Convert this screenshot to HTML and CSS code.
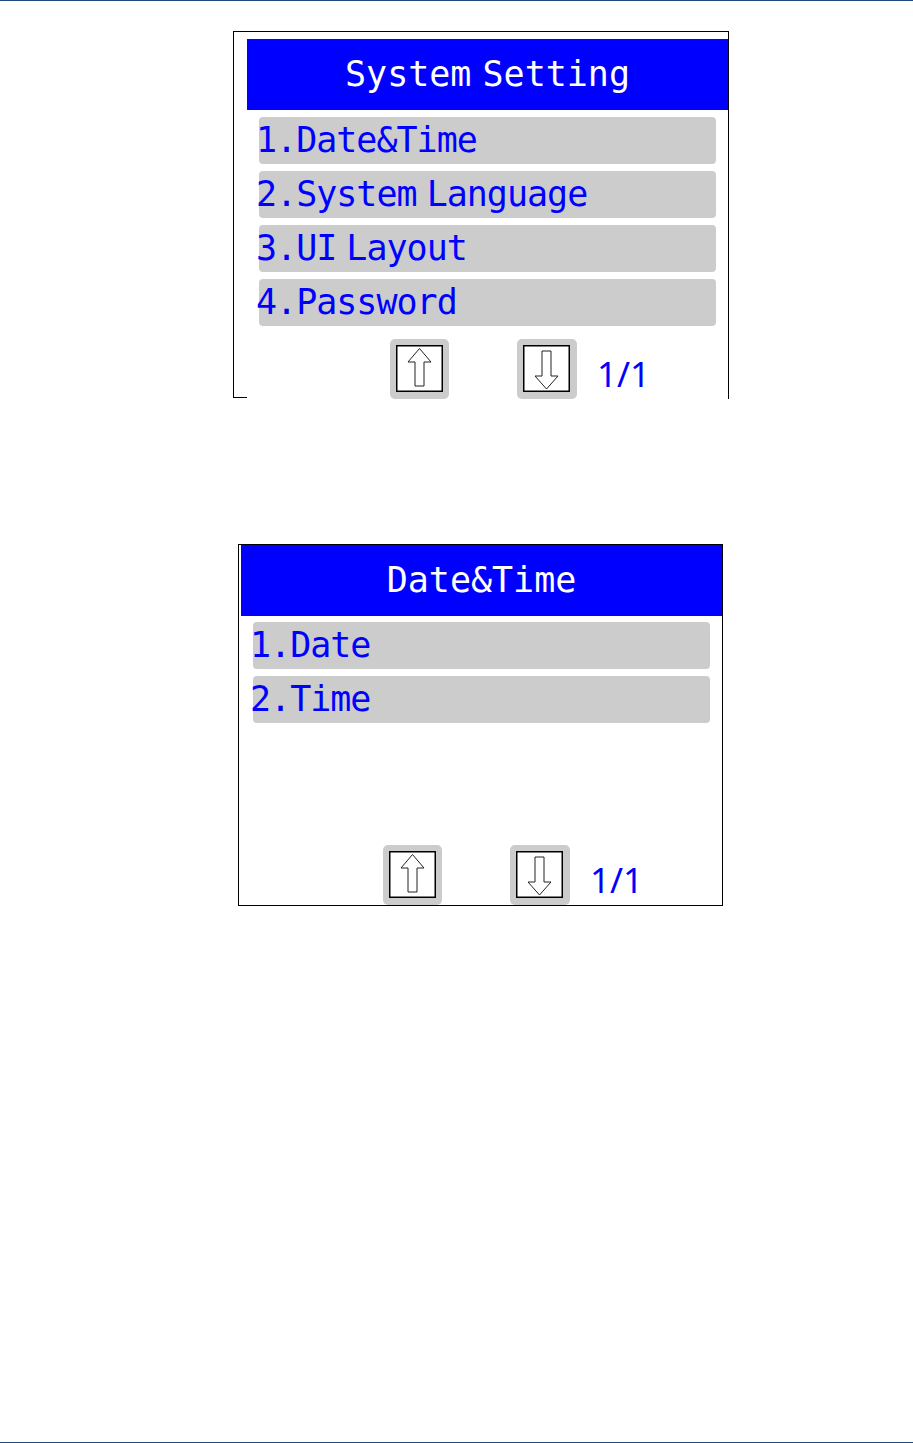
FILE: index.html
```html
<!DOCTYPE html>
<html lang="en">
<head>
<meta charset="utf-8">
<title>System Setting</title>
<link rel="stylesheet" href="styles.css">
</head>
<body>
<div class="page">
  <div class="rule"></div>

  <div class="frame frame-one">
    <div class="frame-spacer"></div>
    <div class="screen">
      <div class="screen-title">System Setting</div>
      <div class="menu">
        <div class="menu-row">1.Date&amp;Time</div>
        <div class="menu-row">2.System Language</div>
        <div class="menu-row">3.UI Layout</div>
        <div class="menu-row">4.Password</div>
      </div>
      <div class="pager">
        <div class="pager-btn">
          <svg width="47" height="47" viewBox="0 0 47 47"><rect x="0.75" y="0.75" width="45.5" height="45.5" fill="#fff" stroke="#000" stroke-width="1.5"/><polygon points="23.5,3.5 35,17 28,17 28,41 19,41 19,17 12,17" fill="#fff" stroke="#222" stroke-width="1"/></svg>
        </div>
        <div class="pager-btn pager-btn-down">
          <svg width="47" height="47" viewBox="0 0 47 47"><rect x="0.75" y="0.75" width="45.5" height="45.5" fill="#fff" stroke="#000" stroke-width="1.5"/><polygon points="19,6 28,6 28,31 35,31 23.5,44 12,31 19,31" fill="#fff" stroke="#222" stroke-width="1"/></svg>
        </div>
        <div class="pager-count">1/1</div>
      </div>
    </div>
  </div>

  <div class="frame frame-two">
    <div class="screen">
      <div class="screen-title">Date&amp;Time</div>
      <div class="menu menu-tight">
        <div class="menu-row">1.Date</div>
        <div class="menu-row">2.Time</div>
      </div>
      <div class="pager pager-tight">
        <div class="pager-btn">
          <svg width="47" height="47" viewBox="0 0 47 47"><rect x="0.75" y="0.75" width="45.5" height="45.5" fill="#fff" stroke="#000" stroke-width="1.5"/><polygon points="23.5,3.5 35,17 28,17 28,41 19,41 19,17 12,17" fill="#fff" stroke="#222" stroke-width="1"/></svg>
        </div>
        <div class="pager-btn pager-btn-down">
          <svg width="47" height="47" viewBox="0 0 47 47"><rect x="0.75" y="0.75" width="45.5" height="45.5" fill="#fff" stroke="#000" stroke-width="1.5"/><polygon points="19,6 28,6 28,31 35,31 23.5,44 12,31 19,31" fill="#fff" stroke="#222" stroke-width="1"/></svg>
        </div>
        <div class="pager-count">1/1</div>
      </div>
    </div>
  </div>

  <div class="rule rule-bottom"></div>
</div>
</body>
</html>
```

FILE: styles.css
```css
html, body {
  margin: 0;
  padding: 0;
  background: #fff;
}

.page {
  width: 913px;
  height: 1443px;
  display: flex;
  flex-direction: column;
  font-family: "DejaVu Sans Mono", "Liberation Mono", monospace;
}

.rule {
  height: 1px;
  background: #1f497d;
  flex: none;
}

.rule-bottom {
  margin-top: auto;
}

.frame {
  display: flex;
  align-items: flex-start;
  flex: none;
  box-sizing: content-box;
}

.frame-one {
  margin-top: 30px;
  margin-left: 233px;
  width: 495px;
  border-top: 1px solid #000;
  border-right: 1px solid #000;
  padding-top: 7px;
}

.frame-spacer {
  width: 13px;
  height: 358px;
  margin-top: -7px;
  padding-top: 7px;
  border-left: 1px solid #000;
  border-bottom: 1px solid #000;
  flex: none;
}

.frame-two {
  margin-top: 145px;
  margin-left: 238px;
  width: 481px;
  border: 1px solid #000;
  padding-left: 2px;
}

.screen {
  width: 481px;
  height: 360px;
  display: flex;
  flex-direction: column;
  flex: none;
}

.screen-title {
  height: 71px;
  line-height: 71px;
  background: #0000ff;
  color: #fff;
  font-size: 35px;
  text-align: center;
  word-spacing: -10px;
  white-space: pre;
  flex: none;
}

.menu {
  display: flex;
  flex-direction: column;
  gap: 7px;
  padding: 7px 12px 0 12px;
}

.menu-tight {
  padding-top: 6px;
}

.menu-row {
  height: 47px;
  line-height: 47px;
  background: #cccccc;
  border-radius: 4px;
  color: #0000ff;
  font-size: 35px;
  letter-spacing: -1px;
  word-spacing: -10px;
  text-indent: -3px;
  white-space: pre;
}

.pager {
  margin-top: auto;
  height: 60px;
  display: flex;
  align-items: flex-start;
  padding-left: 143px;
  flex: none;
}

.pager-tight {
  padding-left: 142px;
}

.pager-btn {
  background: #cccccc;
  border-radius: 5px;
  padding: 6px 6px 7px 6px;
  display: flex;
}

.pager-btn svg {
  display: block;
}

.pager-btn-down {
  margin-left: 68px;
  padding-right: 7px;
}

.pager-count {
  margin-left: 20px;
  margin-top: 17px;
  font-family: "Noto Sans", "Open Sans", sans-serif;
  font-size: 35px;
  line-height: 35px;
  color: #0000ff;
}
```
